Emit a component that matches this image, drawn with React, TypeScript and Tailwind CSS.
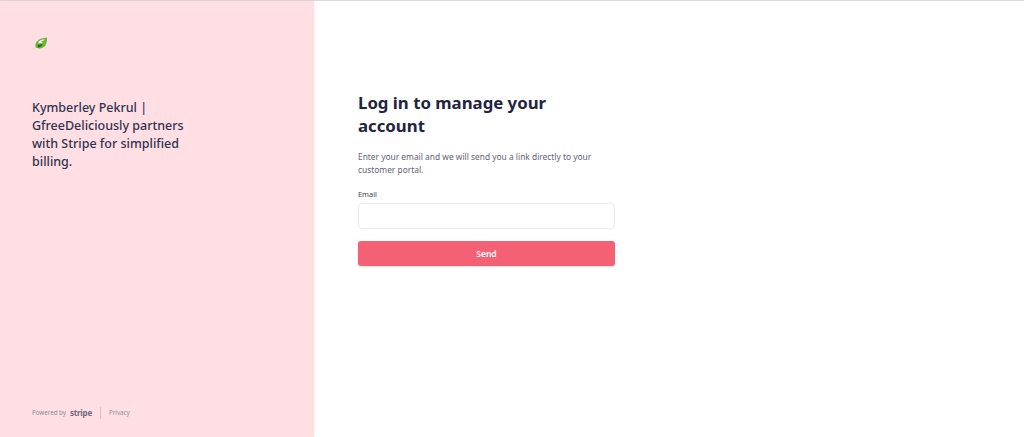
const FONT = "font-['Noto_Sans',sans-serif]";

function Leaf() {
  return (
    <svg width="16" height="13" viewBox="0 0 16 13" aria-hidden="true">
      <path d="M3.4 10C2.6 5 6.2 1 15 .4c.4 6.8-2.2 10.6-7.6 11-1.6.1-3.2-.3-4-1.4z" fill="#6cb53a" />
      <path d="M6.4 4.8C8 3.2 10 2.4 12.6 2.3c-.6 1.3-2 2.1-3.8 2.4l2.2.5c-1 1-2.6 1.4-4.6 1.1z" fill="#eef7e2" />
      <path d="M6 8c1.4-.7 3-.8 4.6-.4-.8 1.8-2.4 2.8-4.8 3z" fill="#26691d" />
      <path d="M3.6 10 .4 12.6" stroke="#d8e6a4" strokeWidth="1" fill="none" />
    </svg>
  );
}

export default function App() {
  return (
    <div className={`flex h-[437px] w-[1024px] flex-col overflow-hidden bg-white ${FONT}`}>
      <div className="h-px shrink-0 bg-[#d9d9d9]" />
      <div className="flex min-h-0 flex-1">
        <aside className="flex w-[314px] shrink-0 flex-col bg-[#ffdfe3] pl-[32px] shadow-[1px_0_2px_rgba(0,0,0,0.04)]">
          <div className="mt-[36px] h-[13px]">
            <Leaf />
          </div>
          <h2 className="mt-[49px] w-[170px] text-[12.5px] leading-[18px] font-medium text-[#2f3350]">
            Kymberley Pekrul | GfreeDeliciously partners with Stripe for simplified billing.
          </h2>
          <footer className="mt-auto mb-[18px] flex items-center text-[6.2px] text-[#8e8a9c]">
            <span>Powered by</span>
            <span className="ml-[4px] text-[8px] leading-[12px] font-bold tracking-[-0.2px] text-[#6d6a80]">stripe</span>
            <span className="mx-[8px] h-[12px] w-px bg-[#d9bcc4]" />
            <span>Privacy</span>
          </footer>
        </aside>
        <main className="flex-1 pl-[44px]">
          <div className="w-[257px] pt-[90px]">
            <h1 className="w-[200px] text-[16.8px] leading-[23px] font-bold text-[#1f2440]">
              Log in to manage your account
            </h1>
            <p className="mt-[13px] text-[8.4px] leading-[13px] text-[#5f6377]">
              Enter your email and we will send you a link directly to your customer portal.
            </p>
            <label className="mt-[13px] block text-[7.4px] leading-[10px] text-[#3c4257]">Email</label>
            <input
              type="email"
              className="mt-[4px] block h-[26px] w-full rounded-[4px] border border-[#eaebee] bg-white"
            />
            <button className="mt-[12px] flex h-[25px] w-full items-center justify-center rounded-[3px] bg-[#f46174] pt-px text-[8.5px] font-semibold text-white shadow-[0_1px_2px_rgba(0,0,0,0.12)]">
              Send
            </button>
          </div>
        </main>
      </div>
    </div>
  );
}
